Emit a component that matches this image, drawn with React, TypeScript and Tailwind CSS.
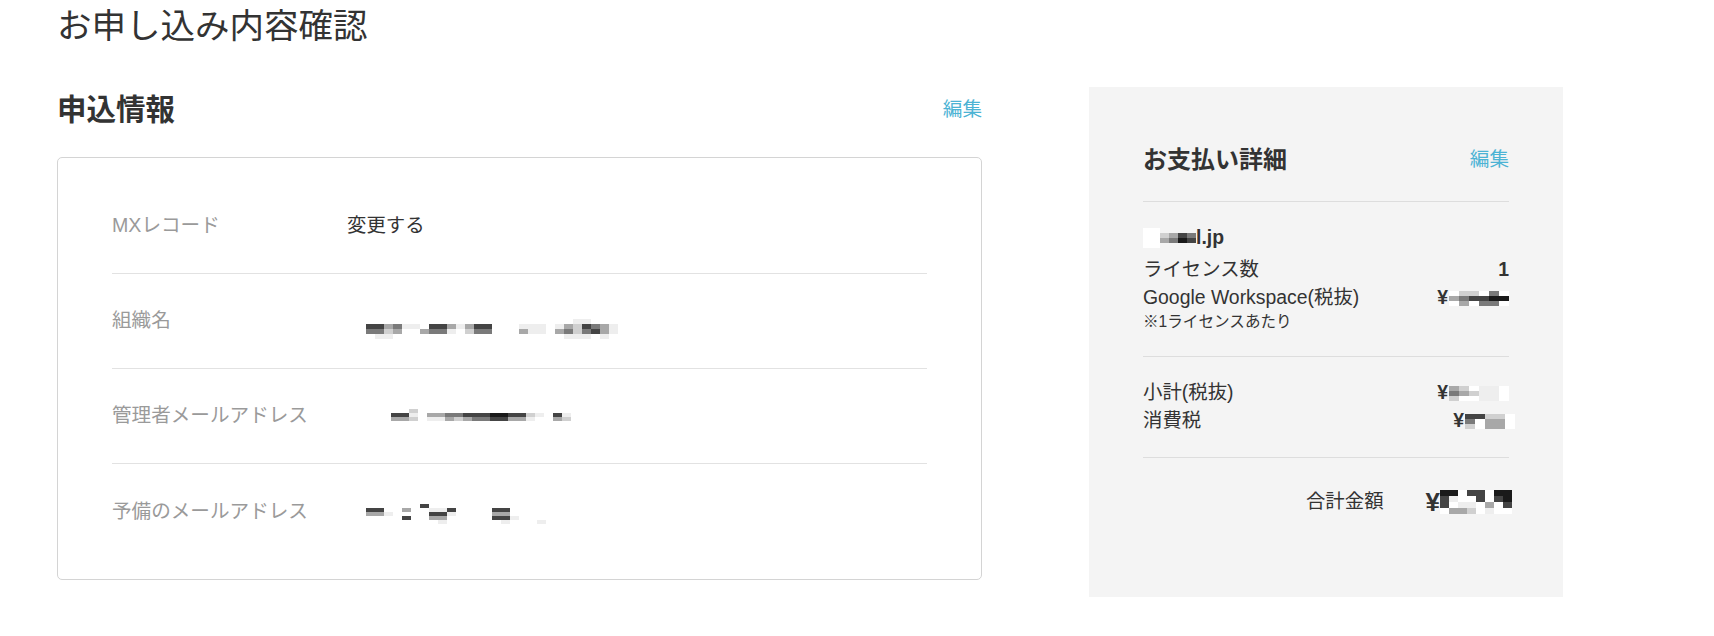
import React from 'react'

// Censored values are drawn as grey mosaic cells, like the blurred screenshot
const shade: Record<string, string> = {
  '0': 'bg-transparent',
  w: 'bg-white',
  '1': 'bg-[#eeeeee]',
  '2': 'bg-[#d0d0d0]',
  '3': 'bg-[#a8a8a8]',
  '4': 'bg-[#7a7a7a]',
  '5': 'bg-[#444444]',
  '6': 'bg-[#1a1a1a]',
}

interface MosaicProps {
  rows: string[]
  cell: string
  className?: string
}

function Mosaic({ rows, cell, className = '' }: MosaicProps) {
  return (
    <span className={`inline-flex flex-col ${className}`}>
      {rows.map((row, i) => (
        <span key={i} className="flex">
          {row.split('').map((c, j) => (
            <span key={j} className={`${cell} ${shade[c]}`} />
          ))}
        </span>
      ))}
    </span>
  )
}

function InfoRow({ label, children, last = false }: { label: string; children: React.ReactNode; last?: boolean }) {
  return (
    <div className={`flex h-[95px] items-center ${last ? '' : 'border-b border-[#e2e2e2]'}`}>
      <div className="w-[235px] shrink-0 text-[19.6px] text-[#9a9a9a]">{label}</div>
      <div className="flex items-center text-[19.4px] text-[#333]">{children}</div>
    </div>
  )
}

function Yen({ rows, cell = 'w-[10px] h-[5px]' }: { rows: string[]; cell?: string }) {
  return (
    <span className="flex items-center font-bold">
      <span>¥</span>
      <Mosaic rows={rows} cell={cell} className="ml-[1px]" />
    </span>
  )
}

export default function App() {
  return (
    <div className="min-h-[636px] bg-white pl-[57px] pt-[6px] font-['Liberation_Sans','Noto_Sans_CJK_JP',sans-serif] text-[#333]">
      <h1 className="text-[34.5px] leading-[40px]">お申し込み内容確認</h1>

      <div className="mt-[41px] flex items-start gap-[107px]">
        {/* 申込情報 */}
        <section className="w-[925px]">
          <div className="mt-[3px] flex h-[40px] items-center justify-between">
            <h2 className="text-[29.5px] font-bold leading-[40px]">申込情報</h2>
            <a className="cursor-pointer text-[19.6px] text-[#4cb3d4]">編集</a>
          </div>

          <div className="mt-[27px] rounded-[5px] border border-[#d4d4d4] px-[54px] pt-[21px] pb-[20px]">
            <InfoRow label="MXレコード">変更する</InfoRow>
            <InfoRow label="組織名">
              <Mosaic
                className="ml-[19px] mt-[16px]"
                cell="w-[9px] h-[5px]"
                rows={[
                  '0000000000000000000000011000',
                  '5534110553135500011101325431',
                  '4423003441024400031103424531',
                  '0110000000000000000000111010',
                ]}
              />
            </InfoRow>
            <InfoRow label="管理者メールアドレス">
              <Mosaic
                className="ml-[44px] mt-[-2px]"
                cell="w-[9px] h-[4px]"
                rows={[
                  '002000000000000000000',
                  '551033445556655210510',
                  '332011323445533100320',
                ]}
              />
            </InfoRow>
            <InfoRow label="予備のメールアドレス" last>
              <Mosaic
                className="ml-[19px] mt-[4px]"
                cell="w-[9px] h-[4px]"
                rows={[
                  '000000500000000000000',
                  '550030011500005500000',
                  '331000055100003300000',
                  '000050033000005510000',
                  '000000001000000100010',
                ]}
              />
            </InfoRow>
          </div>
        </section>

        {/* お支払い詳細 */}
        <aside className="w-[474px] bg-[#f4f4f4] px-[54px] pt-[55px] pb-[77px] text-[19.4px]">
          <div className="flex h-[36px] items-center justify-between">
            <h3 className="text-[24px] font-bold leading-[36px]">お支払い詳細</h3>
            <a className="cursor-pointer text-[19.6px] text-[#4cb3d4]">編集</a>
          </div>

          <div className="mt-[23px] border-t border-[#dddddd]" />

          <div className="mt-[22px] flex h-[28px] items-center font-bold">
            <span className="h-[20px] w-[17px] bg-white" />
            <Mosaic cell="w-[9px] h-[5px]" rows={['2354', '3465']} />
            <span>l.jp</span>
          </div>
          <div className="mt-[4px] flex h-[28px] items-center justify-between">
            <span>ライセンス数</span>
            <span className="font-bold">1</span>
          </div>
          <div className="flex h-[28px] items-center justify-between">
            <span>Google Workspace(税抜)</span>
            <Yen rows={['w22w4w', '345566', 'w3w44w']} />
          </div>
          <div className="text-[15.6px] leading-[20px]">※1ライセンスあたり</div>

          <div className="mt-[24px] border-t border-[#dddddd]" />

          <div className="mt-[22px] flex h-[28px] items-center justify-between">
            <span>小計(税抜)</span>
            <Yen rows={['32w11w', '43211w', '2ww11w']} />
          </div>
          <div className="flex h-[28px] items-center justify-between">
            <span>消費税</span>
            <span className="mr-[-6px]">
              <Yen rows={['5522w', '4w33w', '2w33w']} />
            </span>
          </div>

          <div className="mt-[22px] border-t border-[#dddddd]" />

          <div className="mt-[26px] flex h-[36px] items-center justify-end">
            <span>合計金額</span>
            <span className="ml-[42px] mr-[-3px] flex items-center text-[26px] font-bold">
              <span>¥</span>
              <Mosaic
                cell="w-[9px] h-[6px]"
                rows={['66w55w66', '51ww5w56', '5w11w3w5', 'w332w1ww']}
              />
            </span>
          </div>
        </aside>
      </div>
    </div>
  )
}
